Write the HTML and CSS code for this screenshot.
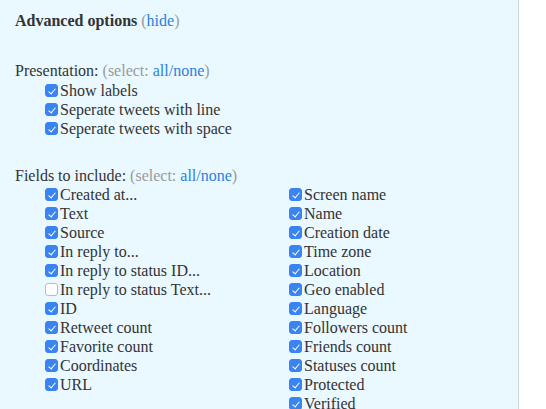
FILE: index.html
```html
<!DOCTYPE html>
<html>
<head>
<meta charset="utf-8">
<link rel="stylesheet" href="styles.css">
</head>
<body>
<div class="panel">
  <div class="title"><b>Advanced options</b> <span class="muted">(<a href="#">hide</a>)</span></div>

  <div class="group-label">Presentation: <span class="muted">(select: <a href="#">all/none</a>)</span></div>
  <div class="list first">
    <label class="opt"><input type="checkbox" checked>Show labels</label>
    <label class="opt"><input type="checkbox" checked>Seperate tweets with line</label>
    <label class="opt"><input type="checkbox" checked>Seperate tweets with space</label>
  </div>

  <div class="group-label fields">Fields to include: <span class="muted">(select: <a href="#">all/none</a>)</span></div>
  <div class="cols">
    <div class="list">
      <label class="opt"><input type="checkbox" checked>Created at...</label>
      <label class="opt"><input type="checkbox" checked>Text</label>
      <label class="opt"><input type="checkbox" checked>Source</label>
      <label class="opt"><input type="checkbox" checked>In reply to...</label>
      <label class="opt"><input type="checkbox" checked>In reply to status ID...</label>
      <label class="opt"><input type="checkbox">In reply to status Text...</label>
      <label class="opt"><input type="checkbox" checked>ID</label>
      <label class="opt"><input type="checkbox" checked>Retweet count</label>
      <label class="opt"><input type="checkbox" checked>Favorite count</label>
      <label class="opt"><input type="checkbox" checked>Coordinates</label>
      <label class="opt"><input type="checkbox" checked>URL</label>
    </div>
    <div class="list">
      <label class="opt"><input type="checkbox" checked>Screen name</label>
      <label class="opt"><input type="checkbox" checked>Name</label>
      <label class="opt"><input type="checkbox" checked>Creation date</label>
      <label class="opt"><input type="checkbox" checked>Time zone</label>
      <label class="opt"><input type="checkbox" checked>Location</label>
      <label class="opt"><input type="checkbox" checked>Geo enabled</label>
      <label class="opt"><input type="checkbox" checked>Language</label>
      <label class="opt"><input type="checkbox" checked>Followers count</label>
      <label class="opt"><input type="checkbox" checked>Friends count</label>
      <label class="opt"><input type="checkbox" checked>Statuses count</label>
      <label class="opt"><input type="checkbox" checked>Protected</label>
      <label class="opt"><input type="checkbox" checked>Verified</label>
    </div>
  </div>
</div>
</body>
</html>
```

FILE: styles.css
```css
html, body {
  margin: 0;
  padding: 0;
  background: #ffffff;
  height: 100%;
}
body {
  font-family: "Liberation Serif", "Times New Roman", serif;
  font-size: 16px;
  line-height: 19px;
  color: #333333;
}
.panel {
  width: 519px;
  min-height: 100%;
  box-sizing: border-box;
  padding: 11px 0 0 15px;
  background: #eaf8ff;
  border-right: 1px solid #c9d9e5;
}
a {
  color: #2d7fe0;
  text-decoration: none;
}
.muted {
  color: #9a9a9a;
}
.group-label {
  margin-top: 31px;
}
.group-label.fields {
  margin-top: 28px;
}
.list {
  display: flex;
  flex-direction: column;
  padding-left: 27px;
}
.list.first {
  margin-top: 1px;
}
.cols {
  display: grid;
  grid-template-columns: 271px auto;
}
.cols .list + .list {
  padding-left: 0;
}
.opt {
  display: flex;
  align-items: center;
  height: 19px;
  white-space: nowrap;
}
.opt input {
  appearance: none;
  -webkit-appearance: none;
  position: relative;
  box-sizing: border-box;
  width: 13px;
  height: 13px;
  margin: 0 2px 0 3px;
  border: 1px solid #b8bcc2;
  border-radius: 3px;
  background: #ffffff;
  flex: none;
}
.opt input:checked {
  border-color: #3a84f2;
  background: #3a84f2;
}
.opt input:checked::after {
  content: "";
  position: absolute;
  left: 3.5px;
  top: 1.5px;
  width: 3px;
  height: 6px;
  border-right: 1.6px solid #ffffff;
  border-bottom: 1.6px solid #ffffff;
  transform: rotate(40deg);
}
```
